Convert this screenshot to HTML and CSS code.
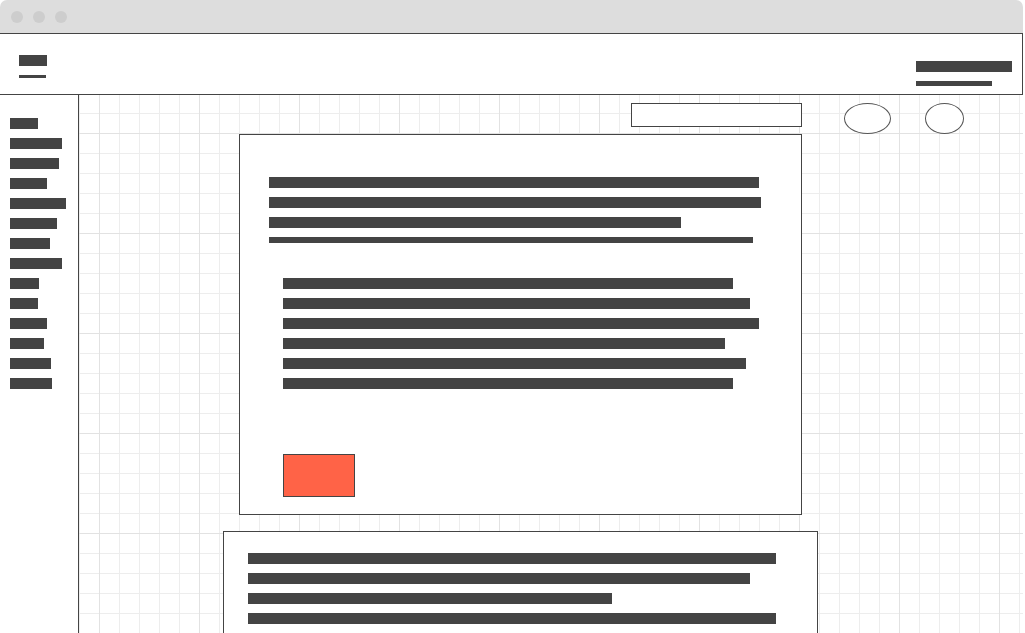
FILE: index.html
```html
<!DOCTYPE html>
<html lang="en">
<head>
<meta charset="utf-8">
<title>Wireframe</title>
<link rel="stylesheet" href="styles.css">
</head>
<body>
<div class="window">
  <div class="chrome">
    <span class="dot"></span>
    <span class="dot"></span>
    <span class="dot"></span>
  </div>
  <header class="topbar">
    <div class="brand">
      <span class="logo"></span>
      <span class="logo-underline"></span>
    </div>
    <div class="account">
      <span class="account-name"></span>
      <span class="account-sub"></span>
    </div>
  </header>
  <div class="body">
    <nav class="sidebar">
      <span class="nav-item" style="width:28px"></span>
      <span class="nav-item" style="width:52px"></span>
      <span class="nav-item" style="width:49px"></span>
      <span class="nav-item" style="width:37px"></span>
      <span class="nav-item" style="width:56px"></span>
      <span class="nav-item" style="width:47px"></span>
      <span class="nav-item" style="width:40px"></span>
      <span class="nav-item" style="width:52px"></span>
      <span class="nav-item" style="width:29px"></span>
      <span class="nav-item" style="width:28px"></span>
      <span class="nav-item" style="width:37px"></span>
      <span class="nav-item" style="width:34px"></span>
      <span class="nav-item" style="width:41px"></span>
      <span class="nav-item" style="width:42px"></span>
    </nav>
    <main class="canvas">
      <div class="search"></div>
      <div class="actions">
        <span class="circle circle-wide"></span>
        <span class="circle circle-narrow"></span>
      </div>
      <section class="card card-main">
        <div class="lines lines-intro">
          <span class="line" style="width:490px"></span>
          <span class="line" style="width:492px"></span>
          <span class="line" style="width:412px"></span>
          <span class="line line-thin" style="width:484px"></span>
        </div>
        <div class="lines lines-body">
          <span class="line" style="width:450px"></span>
          <span class="line" style="width:467px"></span>
          <span class="line" style="width:476px"></span>
          <span class="line" style="width:442px"></span>
          <span class="line" style="width:463px"></span>
          <span class="line" style="width:450px"></span>
        </div>
        <button class="cta" type="button"></button>
      </section>
      <section class="card card-second">
        <div class="lines">
          <span class="line" style="width:528px"></span>
          <span class="line" style="width:502px"></span>
          <span class="line" style="width:364px"></span>
          <span class="line" style="width:528px"></span>
        </div>
      </section>
    </main>
  </div>
</div>
</body>
</html>
```

FILE: styles.css
```css
* {
  box-sizing: border-box;
}

html, body {
  margin: 0;
  padding: 0;
  background: #ffffff;
  font-family: "Liberation Sans", Arial, sans-serif;
}

.window {
  width: 1023px;
  height: 633px;
  display: flex;
  flex-direction: column;
  overflow: hidden;
}

.chrome {
  height: 33px;
  flex: none;
  background: #dddddd;
  border-radius: 7px 7px 0 0;
  display: flex;
  align-items: center;
  gap: 10px;
  padding-left: 11px;
}

.dot {
  width: 12px;
  height: 12px;
  border-radius: 50%;
  background: #cdcdcd;
}

.topbar {
  flex: none;
  height: 62px;
  border-top: 1px solid #444444;
  border-bottom: 1px solid #444444;
  border-right: 1px solid #444444;
  display: flex;
  justify-content: space-between;
  align-items: flex-start;
  padding: 0 10px 0 19px;
  background: #ffffff;
}

.brand {
  display: flex;
  flex-direction: column;
  gap: 9px;
  padding-top: 21px;
}

.logo {
  display: block;
  width: 28px;
  height: 11px;
  background: #444444;
}

.logo-underline {
  display: block;
  width: 27px;
  height: 3px;
  background: #444444;
}

.account {
  display: flex;
  flex-direction: column;
  gap: 9px;
  padding-top: 27px;
}

.account-name {
  display: block;
  width: 96px;
  height: 11px;
  background: #444444;
}

.account-sub {
  display: block;
  width: 76px;
  height: 5px;
  background: #444444;
}

.body {
  flex: 1;
  display: flex;
  min-height: 0;
  box-shadow: 2px 0 0 #ebebeb;
}

.sidebar {
  width: 79px;
  flex: none;
  border-right: 1px solid #444444;
  display: flex;
  flex-direction: column;
  align-items: flex-start;
  gap: 9px;
  padding: 23px 0 0 10px;
  background: #ffffff;
}

.nav-item {
  display: block;
  height: 11px;
  background: #444444;
}

.canvas {
  flex: 1;
  display: grid;
  grid-template-columns: 144px 595px 1fr;
  grid-template-rows: 31px auto auto;
  align-content: start;
  padding-top: 8px;
  background-color: #ffffff;
  background-image:
    linear-gradient(to right, #e2e2e2 1px, transparent 1px),
    linear-gradient(to bottom, #e2e2e2 1px, transparent 1px),
    linear-gradient(to right, #ededed 1px, transparent 1px),
    linear-gradient(to bottom, #ededed 1px, transparent 1px);
  background-size: 100px 100px, 100px 100px, 20px 20px, 20px 20px;
  background-position: 20px 0, 0 38px, 0 0, 0 18px;
}

.search {
  grid-column: 2;
  grid-row: 1;
  justify-self: end;
  align-self: start;
  width: 171px;
  height: 24px;
  margin-right: 16px;
  border: 1px solid #444444;
  background: #ffffff;
}

.actions {
  grid-column: 3;
  grid-row: 1;
  display: flex;
  gap: 34px;
  padding-left: 26px;
}

.circle {
  display: block;
  height: 31px;
  border: 1px solid #555555;
  border-radius: 50%;
  background: #ffffff;
}

.circle-wide {
  width: 47px;
}

.circle-narrow {
  width: 39px;
}

.card {
  grid-column: 2;
  border: 1px solid #444444;
  background: #ffffff;
}

.card-main {
  grid-row: 2;
  margin: 0 16px;
  padding: 42px 0 17px 29px;
  display: flex;
  flex-direction: column;
  align-items: flex-start;
}

.lines {
  display: flex;
  flex-direction: column;
  align-items: flex-start;
  gap: 9px;
}

.line {
  display: block;
  height: 11px;
  background: #444444;
}

.line-thin {
  height: 6px;
}

.lines-body {
  margin-top: 35px;
  padding-left: 14px;
}

.cta {
  margin: 65px 0 0 14px;
  width: 72px;
  height: 43px;
  padding: 0;
  border: 1px solid #444444;
  background: #ff6347;
  border-radius: 0;
}

.card-second {
  grid-row: 3;
  margin-top: 16px;
  height: 200px;
  padding: 21px 0 0 24px;
}
```
